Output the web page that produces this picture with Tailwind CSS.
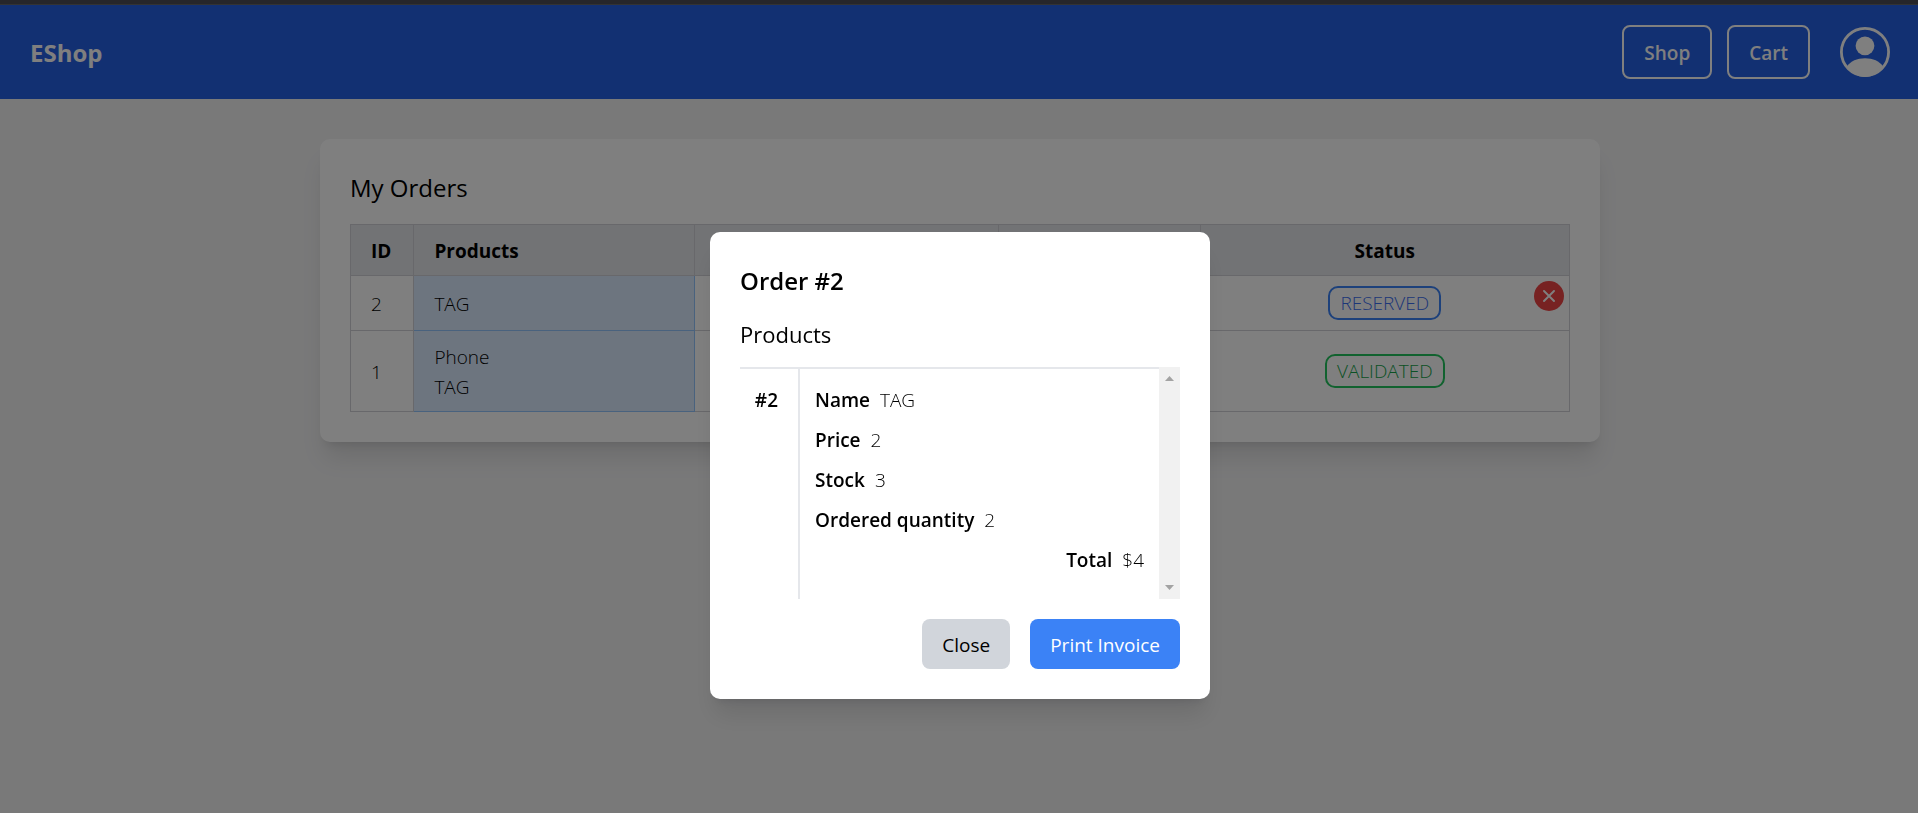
<!DOCTYPE html>
<html lang="en">
<head>
<meta charset="utf-8">
<title>EShop</title>
<script src="https://cdn.jsdelivr.net/npm/@tailwindcss/browser@4"></script>
</head>
<body class="min-h-screen bg-[#f2f2f3] font-['Segoe_UI','Open_Sans',sans-serif] text-[19px] leading-[30px] font-light text-black">
  <header class="flex h-[99px] items-center justify-between border-t-5 border-[#4e4e54] bg-[#2460e4] pr-7 pl-[30px] text-white">
    <h1 class="pt-[2px] text-2xl font-bold"><a href="#">EShop</a></h1>
    <nav class="flex items-center gap-[15px] font-semibold">
      <a href="#" class="rounded-lg border-2 border-white px-5 pt-[11px] pb-[9px]">Shop</a>
      <a href="#" class="rounded-lg border-2 border-white px-5 pt-[11px] pb-[9px]">Cart</a>
      <button type="button" aria-label="Account" class="ml-[15px]">
        <svg class="size-[50px]" viewBox="0 0 50 50" fill="currentColor" aria-hidden="true">
          <circle cx="25" cy="25" r="23.6" fill="none" stroke="currentColor" stroke-width="2.8"/>
          <circle cx="25" cy="18.8" r="9.4"/>
          <path d="M7 39.5C10.500 34 17 31.200 25 31.200S39.500 34 43 39.500C39 45.700 32.500 50 25 50S11 45.700 7 39.500Z"/>
        </svg>
      </button>
    </nav>
  </header>

  <div class="pt-10 pl-[2px]">
    <main class="mx-auto w-full max-w-[1280px] rounded-[10px] bg-white p-[30px] shadow-xl">
      <h2 class="mb-[19px] pt-px text-2xl leading-[35px] font-medium">My Orders</h2>
      <table class="w-full table-fixed border-collapse">
        <colgroup>
          <col class="w-[5.200%]"><col class="w-[23%]"><col class="w-[25%]"><col class="w-[16.500%]"><col>
        </colgroup>
        <thead class="h-[51px] bg-[#e5e7eb] text-left font-bold">
          <tr>
            <th scope="col" class="border border-[#d1d1d6] px-5 pt-[2px]">ID</th>
            <th scope="col" class="border border-[#d1d1d6] px-5 pt-[2px]">Products</th>
            <td class="border border-[#d1d1d6]"></td>
            <td class="border border-[#d1d1d6]"></td>
            <th scope="col" class="border border-[#d1d1d6] pt-[2px] text-center">Status</th>
          </tr>
        </thead>
        <tbody>
          <tr class="h-[55px]">
            <td class="border border-[#d1d1d6] px-5 pt-[2px]">2</td>
            <td class="border border-[#93c5fd] bg-[#dbeafe] px-5 pt-[2px]">TAG</td>
            <td class="border border-[#d1d1d6]"></td>
            <td class="border border-[#d1d1d6]"></td>
            <td class="relative border border-[#d1d1d6] text-center">
              <span class="inline-block rounded-[10px] border-2 border-[#3b82f6] px-[10px] pt-px leading-[29px] text-[#3b6ef0]">RESERVED</span>
              <button type="button" aria-label="Cancel order 2" class="absolute top-[5px] right-[5px] flex size-[30px] items-center justify-center rounded-full bg-[#ef4444] text-white">
                <svg class="size-3" viewBox="0 0 12 12" fill="none" stroke="currentColor" stroke-width="1.900" stroke-linecap="round" aria-hidden="true"><path d="M1 1l10 10M11 1L1 11"/></svg>
              </button>
            </td>
          </tr>
          <tr class="h-[81px]">
            <td class="border border-[#d1d1d6] px-5 pt-[2px]">1</td>
            <td class="border border-[#93c5fd] bg-[#dbeafe] px-5 pt-[2px]">Phone<br>TAG</td>
            <td class="border border-[#d1d1d6]"></td>
            <td class="border border-[#d1d1d6]"></td>
            <td class="border border-[#d1d1d6] text-center">
              <span class="inline-block rounded-[10px] border-2 border-[#22c55e] px-[10px] pt-px leading-[29px] text-[#16a34a]">VALIDATED</span>
            </td>
          </tr>
        </tbody>
      </table>
    </main>
  </div>

  <!-- Order details dialog -->
  <div class="fixed inset-0 flex items-center justify-center bg-black/50 pt-[117px] pl-[2px]">
    <section role="dialog" aria-modal="true" aria-labelledby="order-title" class="w-full max-w-[500px] rounded-[10px] bg-white p-[30px] shadow-xl">
      <h2 id="order-title" class="mb-[19px] pt-px text-2xl leading-[35px] font-semibold">Order #2</h2>
      <h3 class="mb-[18px] pt-[2px] text-[22px] leading-[30px] font-medium">Products</h3>
      <div class="flex h-[232px]">
        <div class="flex grow border-t-2 border-[#e5e7eb]">
          <div class="w-[60px] shrink-0 border-r-2 border-[#e5e7eb] pt-4 pr-5 text-right font-semibold">#2</div>
          <dl class="flex grow flex-col gap-[10px] px-[15px] pt-4">
            <div class="flex gap-[10px]"><dt class="font-semibold">Name</dt><dd>TAG</dd></div>
            <div class="flex gap-[10px]"><dt class="font-semibold">Price</dt><dd>2</dd></div>
            <div class="flex gap-[10px]"><dt class="font-semibold">Stock</dt><dd>3</dd></div>
            <div class="flex gap-[10px]"><dt class="font-semibold">Ordered quantity</dt><dd>2</dd></div>
            <div class="flex justify-end gap-[10px]"><dt class="font-semibold">Total</dt><dd>$4</dd></div>
          </dl>
        </div>
        <div class="flex w-[21px] flex-col items-center justify-between bg-[#f1f1f1] py-[9px] text-[#a3a3a3]" aria-hidden="true">
          <svg class="h-[5px] w-[9px]" viewBox="0 0 9 5" fill="currentColor"><path d="M4.500 0L9 5H0Z"/></svg>
          <svg class="h-[5px] w-[9px]" viewBox="0 0 9 5" fill="currentColor"><path d="M0 0H9L4.500 5Z"/></svg>
        </div>
      </div>
      <div class="mt-5 flex justify-end gap-5 font-normal">
        <button type="button" class="rounded-lg bg-[#d1d5db] px-5 pt-[11px] pb-[9px]">Close</button>
        <button type="button" class="rounded-lg bg-[#3b82f6] px-5 pt-[11px] pb-[9px] text-white">Print Invoice</button>
      </div>
    </section>
  </div>
  <div class="fixed inset-x-0 top-0 h-[5px] border-b border-[#333333] bg-[#26262a]" aria-hidden="true"></div>
</body>
</html>
